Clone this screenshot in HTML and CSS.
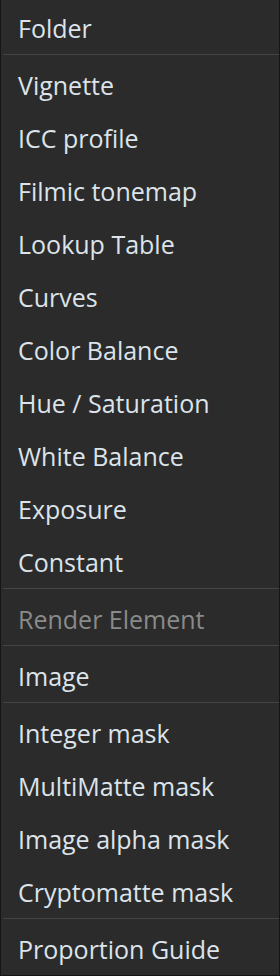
FILE: index.html
```html
<!DOCTYPE html>
<html lang="en">
<head>
    <meta charset="UTF-8">
    <title>Add Menu</title>
    <link rel="stylesheet" href="styles.css">
</head>
<body>
    <div class="menu">
        <div class="menu-item">Folder</div>
        <div class="menu-sep"></div>
        <div class="menu-item">Vignette</div>
        <div class="menu-item">ICC profile</div>
        <div class="menu-item">Filmic tonemap</div>
        <div class="menu-item">Lookup Table</div>
        <div class="menu-item">Curves</div>
        <div class="menu-item">Color Balance</div>
        <div class="menu-item">Hue / Saturation</div>
        <div class="menu-item">White Balance</div>
        <div class="menu-item">Exposure</div>
        <div class="menu-item">Constant</div>
        <div class="menu-sep"></div>
        <div class="menu-item disabled">Render Element</div>
        <div class="menu-sep"></div>
        <div class="menu-item">Image</div>
        <div class="menu-sep"></div>
        <div class="menu-item">Integer mask</div>
        <div class="menu-item">MultiMatte mask</div>
        <div class="menu-item">Image alpha mask</div>
        <div class="menu-item">Cryptomatte mask</div>
        <div class="menu-sep"></div>
        <div class="menu-item">Proportion Guide</div>
    </div>
</body>
</html>
```

FILE: styles.css
```css
/* Global settings */
:root {
    --color-bg: #2b2b2b;
    --color-border: #161616;
    --color-sep: #454545;
    --color-text: #dce3ea;
    --color-disabled: #8a8a8a;
}

html, body {
    margin: 0;
    padding: 0;
    background-color: var(--color-bg);
}

/* Menu */
.menu {
    width: 280px;
    height: 976px;
    box-sizing: border-box;
    border: 1px solid var(--color-border);
    border-top: 0;
    background-color: var(--color-bg);
    font-family: "Open Sans", "Noto Sans", sans-serif;
    font-size: 25px;
    color: var(--color-text);
}

.menu-item {
    height: 53px;
    line-height: 57px;
    padding-left: 17px;
    white-space: nowrap;
}

.menu-item.disabled {
    color: var(--color-disabled);
}

.menu-sep {
    height: 1px;
    margin: 1px 0 2px 2px;
    background-color: var(--color-sep);
}
```
